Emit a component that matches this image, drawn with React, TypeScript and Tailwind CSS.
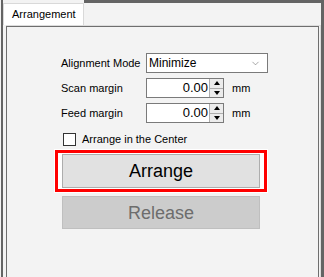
import { ChevronDown } from 'lucide-react'

function Spinner() {
  return (
    <div className="flex flex-col w-[14px] h-full border-l border-[#adadad] bg-[#ececec]">
      <div className="flex-1 flex items-center justify-center border-b border-[#adadad]">
        <div className="w-0 h-0 border-l-[3px] border-r-[3px] border-b-[4px] border-l-transparent border-r-transparent border-b-[#000]" />
      </div>
      <div className="flex-1 flex items-center justify-center">
        <div className="w-0 h-0 border-l-[3px] border-r-[3px] border-t-[4px] border-l-transparent border-r-transparent border-t-[#000]" />
      </div>
    </div>
  )
}

function MarginRow({ label, value }: { label: string; value: string }) {
  return (
    <div className="flex items-center h-[20px] mt-[5px]">
      <span className="w-[85px] text-[11px] leading-none">{label}</span>
      <div className="flex w-[78px] h-[20px] border border-[#7a7a7a] bg-white">
        <span className="flex-1 text-right text-[13px] leading-[18px] pr-px">{value}</span>
        <Spinner />
      </div>
      <span className="ml-[8px] text-[11px] leading-none">mm</span>
    </div>
  )
}

export default function App() {
  return (
    <div className="w-[324px] h-[277px] bg-[#f3f3f3] overflow-hidden font-['Liberation_Sans',sans-serif] text-black">
      <div className="flex h-full">
        <div className="w-px" />
        <div className="w-[2px] bg-[#646464]" />
        <div className="flex-1 flex flex-col">
          {/* tab strip */}
          <div className="flex h-[25px] shrink-0">
            <div className="w-[81px] mt-[3px] bg-white border-l border-t border-r border-[#d9d9d9] pl-[8px] text-[11px] leading-[21px]">
              Arrangement
            </div>
            <div className="flex-1 h-[3px] bg-[#646464]" />
          </div>

          {/* tab panel */}
          <div className="flex-1 flex ml-[3px] border-t border-r border-[#dcdcdc] pr-px">
            <div className="flex-1 border-l border-t border-r border-[#6e6e6e] flex flex-col">
              <div className="pl-[54px] pt-[26px]">
                <div className="flex items-center h-[20px]">
                  <span className="w-[85px] text-[11px] leading-none">Alignment Mode</span>
                  <div className="flex items-center w-[122px] h-[20px] border border-[#7a7a7a] bg-white pl-[2px] pr-[6px]">
                    <span className="flex-1 text-[12px] leading-none">Minimize</span>
                    <ChevronDown size={11} strokeWidth={1.2} className="text-[#606060]" />
                  </div>
                </div>
                <MarginRow label="Scan margin" value="0.00" />
                <MarginRow label="Feed margin" value="0.00" />
              </div>

              <label className="flex items-center mt-[10px] ml-[56px] h-[13px]">
                <span className="w-[13px] h-[13px] border border-[#333] bg-white" />
                <span className="ml-[6px] text-[11px] leading-none">Arrange in the Center</span>
              </label>

              <div className="ml-[48px] mt-[4px] w-[212px] border-[3px] border-[#ff0000] bg-white px-[4px] py-[1px] shadow-[0_0_0_1px_#fff]">
                <button className="w-[198px] h-[34px] bg-[#e1e1e1] border border-[#adadad] text-[18px] leading-none">
                  Arrange
                </button>
              </div>

              <button className="ml-[55px] mt-[4px] w-[198px] h-[33px] bg-[#cccccc] border border-[#bfbfbf] text-[18px] leading-none text-[#6d6d6d]">
                Release
              </button>
            </div>
          </div>
        </div>
        <div className="w-[3px] bg-[#646464]" />
      </div>
    </div>
  )
}
